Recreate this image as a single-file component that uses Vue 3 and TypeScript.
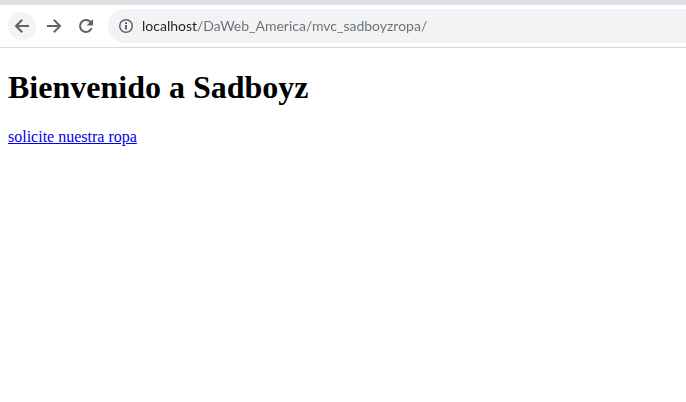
<script setup lang="ts">
import { ref } from 'vue'

const address = ref<string>('localhost/DaWeb_America/mvc_sadboyzropa/')
</script>

<template>
  <div class="browser">
    <div class="tab-strip"></div>
    <header class="toolbar">
      <nav class="controls" aria-label="Navegación">
        <button class="control active" type="button" aria-label="Atrás">
          <svg viewBox="0 0 28 28" aria-hidden="true">
            <path d="M21 14H8.5M14.2 7.8L8 14l6.2 6.2" />
          </svg>
        </button>
        <button class="control" type="button" aria-label="Adelante">
          <svg viewBox="0 0 28 28" aria-hidden="true">
            <path d="M7 14h12.5M13.8 7.8L20 14l-6.2 6.2" />
          </svg>
        </button>
        <button class="control" type="button" aria-label="Recargar">
          <svg viewBox="0 0 28 28" aria-hidden="true">
            <path d="M19.6 16.2A6 6 0 1 1 18.3 9.8L19.6 11.1" />
            <path class="solid" d="M21 7v6.4h-6.4z" />
          </svg>
        </button>
      </nav>
      <div class="omnibox">
        <svg class="info" viewBox="0 0 16 16" aria-hidden="true">
          <circle cx="8" cy="8" r="6.3" />
          <path class="mark" d="M8 7v4.5M8 4.3v1.8" />
        </svg>
        <input v-model="address" class="address" type="text" aria-label="Dirección" spellcheck="false" />
      </div>
    </header>
    <main class="page">
      <h1>Bienvenido a Sadboyz</h1>
      <a href="#">solicite nuestra ropa</a>
    </main>
  </div>
</template>

<style>
body {
  margin: 0;
  background: #fff;
}
</style>

<style scoped>
.tab-strip {
  height: 5px;
  background: #dee1e6;
}
.toolbar {
  display: flex;
  align-items: center;
  gap: 8px;
  padding: 4px 0 4px 8px;
  border-bottom: 1px solid #dadada;
}
.controls {
  display: flex;
  gap: 4px;
}
.control {
  width: 28px;
  height: 28px;
  padding: 0;
  border: 0;
  border-radius: 50%;
  background: transparent;
}
.control.active {
  background: #f4f4f4;
}
.control svg {
  display: block;
  width: 28px;
  height: 28px;
  fill: none;
  stroke: #5f6368;
  stroke-width: 2;
}
.control .solid {
  fill: #5f6368;
  stroke: none;
}
.omnibox {
  display: flex;
  flex: 1;
  align-items: center;
  gap: 8px;
  height: 34px;
  padding-left: 10px;
  border-radius: 17px 0 0 17px;
  background: #f1f3f4;
}
.info {
  flex: none;
  width: 16px;
  height: 16px;
  fill: none;
  stroke: #5f6368;
  stroke-width: 1.5;
}
.info .mark {
  stroke-width: 2;
}
.address {
  flex: 1;
  min-width: 0;
  height: 24px;
  padding: 0 0 2px;
  border: 0;
  outline: 0;
  background: linear-gradient(90deg, #202124 55px, #6b6f73 55px);
  background-clip: text;
  color: transparent;
  caret-color: #202124;
  font: 14px Lato, "Open Sans", sans-serif;
}
.page {
  padding: 0 8px;
  color: #000;
  font: 16px/18px "Liberation Serif", serif;
}
h1 {
  margin: 21px 0 22px;
  font-size: 32px;
  line-height: 37px;
}
a {
  color: #0000ee;
}
</style>
